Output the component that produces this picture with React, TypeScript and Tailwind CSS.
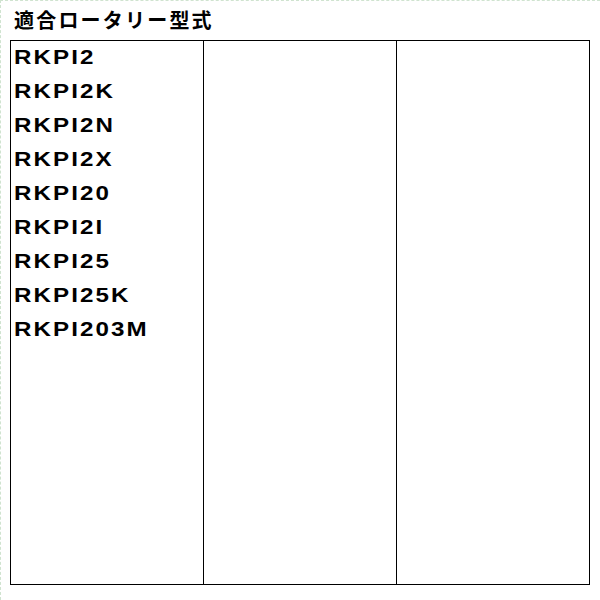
export default function App() {
  const items = [
    "RKPI2",
    "RKPI2K",
    "RKPI2N",
    "RKPI2X",
    "RKPI20",
    "RKPI2I",
    "RKPI25",
    "RKPI25K",
    "RKPI203M",
  ];
  return (
    <div className="w-[600px] h-[600px] bg-white border-l border-t border-dashed border-[#cfe3cf] box-border">
      <div
        className="pt-[9px] pl-[13px] h-[29px] text-[20px] leading-[20px] font-bold tracking-[2.2px] text-black"
        style={{ fontFamily: '"Noto Sans CJK JP", "Noto Sans", sans-serif' }}
      >
        適合ロータリー型式
      </div>
      <div className="ml-[9px] mt-[10px] w-[580px] h-[545px] border border-black grid grid-cols-[192px_1px_192px_1px_192px] box-border">
        <div
          className="pl-[3px] text-[21px] font-bold tracking-[1.8px] text-black"
          style={{ fontFamily: '"Liberation Sans", Arial, sans-serif' }}
        >
          {items.map((t) => (
            <div key={t} className="h-[34px] leading-[32px] whitespace-nowrap">
              <span className="inline-block origin-left scale-x-[1.15]">{t}</span>
            </div>
          ))}
        </div>
        <div className="bg-black" />
        <div />
        <div className="bg-black" />
        <div />
      </div>
    </div>
  );
}
